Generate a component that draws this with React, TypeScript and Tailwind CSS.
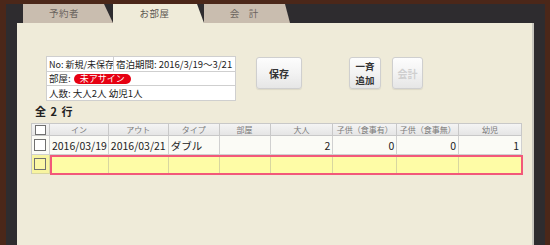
import React from "react";

const cols = [
  { w: 18, label: "" },
  { w: 59, label: "イン" },
  { w: 60, label: "アウト" },
  { w: 51, label: "タイプ" },
  { w: 51, label: "部屋" },
  { w: 63, label: "大人" },
  { w: 64, label: "子供（食事有）" },
  { w: 62, label: "子供（食事無）" },
  { w: 63, label: "幼児" },
];

const dataRow = ["2016/03/19", "2016/03/21", "ダブル", "", "2", "0", "0", "1"];

function Checkbox({ yellow, small }: { yellow?: boolean; small?: boolean }) {
  return (
    <div
      className={`${small ? "w-[11px] h-[10px]" : "w-[12px] h-[12px]"} border border-[#707070] ${
        yellow ? "bg-[#fbf7a6]" : "bg-white"
      }`}
    />
  );
}

function Btn({ children, disabled }: { children: React.ReactNode; disabled?: boolean }) {
  return (
    <div
      className={`h-[32px] flex flex-col items-center justify-center rounded-[3px] border border-[#cfcfcf] bg-gradient-to-b from-[#fdfdfd] via-[#f3f3f3] to-[#e6e6e6] shadow-[0_1px_1px_rgba(0,0,0,0.08)] text-[10px] leading-[13px] font-bold text-center ${
        disabled ? "text-[#cfcfcf]" : "text-[#333]"
      }`}
    >
      {children}
    </div>
  );
}

export default function App() {
  return (
    <div className="w-[550px] h-[245px] overflow-hidden bg-[#4b2719] pt-[4px] pl-[6px] pr-[5px] [font-family:'Noto_Sans_CJK_JP',sans-serif]">
      <div className="h-full bg-[#2e2c2f] px-[11px] flex flex-col">
        {/* tabs */}
        <div className="flex h-[19px] ml-[6px]">
          <div className="w-[90px] h-full bg-[#c9bdaf] [clip-path:polygon(0_0,calc(100%-9px)_0,100%_100%,0_100%)] flex items-center justify-center pr-[8px] text-[9.5px] text-[#6b645e] tracking-[0.5px]">
            予約者
          </div>
          <div className="w-[91px] h-full bg-[#efebd9] [clip-path:polygon(0_0,calc(100%-7px)_0,100%_100%,0_100%)] flex items-center justify-center pr-[8px] text-[9.5px] text-[#5a5550] tracking-[0.5px]">
            お部屋
          </div>
          <div className="w-[86px] h-full bg-[#c9bdaf] [clip-path:polygon(0_0,calc(100%-5px)_0,100%_100%,0_100%)] flex items-center justify-center pr-[6px] text-[9.5px] text-[#6b645e]">
            会　計
          </div>
        </div>
        {/* paper */}
        <div className="flex-1 bg-[#efebd9] shadow-[inset_-2px_0_0_#c9c7bf] pl-[14px] pt-[33px]">
          <div className="flex items-start ml-[15px]">
            <div className="w-[190px] border border-[#cfcfcf] bg-white text-[10px] leading-[13px] text-[#222]">
              <div className="flex h-[15px] border-b border-[#cfcfcf]">
                <div className="w-[67px] border-r border-[#cfcfcf] pl-[2px] flex items-center whitespace-nowrap overflow-hidden text-[9px]">
                  No: 新規/未保存
                </div>
                <div className="flex-1 pl-[2px] flex items-center whitespace-nowrap overflow-hidden text-[9.5px]">
                  宿泊期間: 2016/3/19～3/21
                </div>
              </div>
              <div className="flex h-[14px] border-b border-[#cfcfcf] items-center pl-[2px] whitespace-nowrap text-[9.5px]">
                <span>部屋:</span>
                <span className="ml-[3px] h-[10px] px-[6px] rounded-full bg-[#e60012] text-white text-[9px] leading-[10px] flex items-center">
                  未アサイン
                </span>
              </div>
              <div className="flex h-[14px] items-center pl-[2px] whitespace-nowrap text-[9.5px]">
                人数: 大人2人 幼児1人
              </div>
            </div>
            <div className="ml-[20px] w-[46px] mt-[1px]">
              <Btn>保存</Btn>
            </div>
            <div className="ml-[47px] w-[32px] mt-[1px]">
              <Btn>
                <span className="block text-[9.5px] leading-[14px]">一斉</span>
                <span className="block text-[9.5px] leading-[14px]">追加</span>
              </Btn>
            </div>
            <div className="ml-[11px] w-[31px] mt-[1px]">
              <Btn disabled>会計</Btn>
            </div>
          </div>
          <div className="mt-[4px] ml-[4px] text-[11px] leading-[13px] font-bold text-[#222] tracking-[1px]">
            全 2 行
          </div>
          {/* table */}
          <div className="mt-[5px] w-[491px] border-l border-t border-[#c8c8c8]">
            <div className="flex h-[12px] bg-gradient-to-b from-[#f4f4f4] to-[#e4e4e4]">
              {cols.map((c, i) => (
                <div
                  key={i}
                  style={{ width: c.w }}
                  className="h-full border-r border-b border-[#c8c8c8] flex items-center justify-center text-[8px] leading-[10px] text-[#7a7a7a] whitespace-nowrap overflow-hidden"
                >
                  {i === 0 ? <Checkbox small /> : c.label}
                </div>
              ))}
            </div>
            <div className="flex h-[19px] bg-[#fbfbf6]">
              {cols.map((c, i) => (
                <div
                  key={i}
                  style={{ width: c.w }}
                  className={`h-full border-r border-b border-[#d0d0d0] flex items-center text-[10.5px] leading-[13px] text-[#222] whitespace-nowrap overflow-hidden ${
                    i === 0 ? "justify-center" : i >= 5 ? "justify-end pr-[2px]" : "pl-[2px]"
                  }`}
                >
                  {i === 0 ? <Checkbox /> : dataRow[i - 1]}
                </div>
              ))}
            </div>
            <div className="relative flex h-[19px] bg-[#fefca6]">
              {cols.map((c, i) => (
                <div
                  key={i}
                  style={{ width: c.w }}
                  className={`h-full border-r border-b ${
                    i === 0 ? "border-[#d8d6a0] bg-[#f8f4a0] flex items-center justify-center" : "border-[#d8d6a0]"
                  }`}
                >
                  {i === 0 ? <Checkbox yellow /> : null}
                </div>
              ))}
              <div className="absolute left-[18px] right-[-1px] top-[0px] bottom-[-1px] border-2 border-[#f2587a]" />
            </div>
          </div>
        </div>
      </div>
    </div>
  );
}
